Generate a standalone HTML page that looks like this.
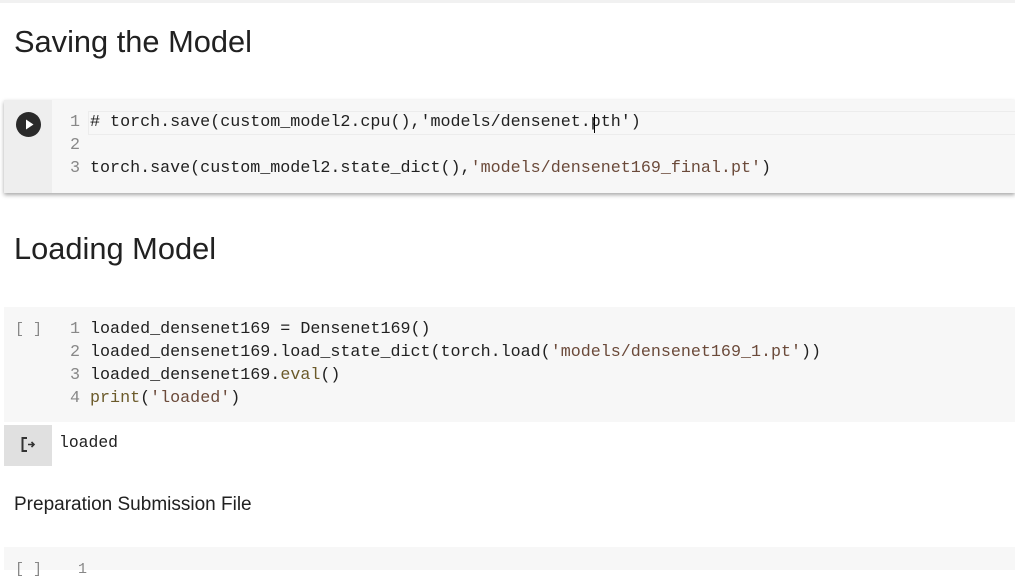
<!DOCTYPE html>
<html><head><style>
body{margin:0;width:1015px;height:570px;background:#fff;position:relative;overflow:hidden;font-family:"Liberation Sans",sans-serif;color:#212121}
.abs{position:absolute}
.code{font-family:"Liberation Mono",monospace;font-size:16.7px;line-height:23px;color:#212121;white-space:pre}
.n{color:#888}
.s{color:#6b4a3a}
.f{color:#6b5a2a}
</style></head><body>
<div class="abs" style="left:0;top:0;width:1015px;height:3px;background:#f1f1f1"></div>
<div class="abs" style="left:14px;top:24px;font-size:30.8px">Saving the Model</div>
<div class="abs" style="left:4px;top:100px;width:1011px;height:93px;background:#f7f7f7;box-shadow:0 2px 4px rgba(0,0,0,.35)"></div>
<div class="abs" style="left:4px;top:100px;width:48px;height:93px;background:#eeeeee"></div>
<div class="abs" style="left:16px;top:112px;width:25px;height:25px;border-radius:50%;background:#2a2a2a"></div>
<svg class="abs" style="left:16px;top:112px" width="25" height="25"><path d="M10 7.5 L17.5 12.5 L10 17.5Z" fill="#fff"/></svg>
<div class="abs" style="left:88px;top:111px;width:927px;height:22px;border:1px solid #ececec;border-right:none"></div>
<div class="abs code" style="left:70px;top:111px"><span class="n">1</span> # torch.save(custom_model2.cpu(),'models/densenet.pth')
<span class="n">2</span>
<span class="n">3</span> torch.save(custom_model2.state_dict(),<span class="s">'models/densenet169_final.pt'</span>)</div>
<div class="abs" style="left:594px;top:114px;width:1px;height:19px;background:#000"></div>
<div class="abs" style="left:14px;top:231px;font-size:30.8px">Loading Model</div>
<div class="abs" style="left:4px;top:307px;width:1011px;height:115px;background:#f7f7f7"></div>
<div class="abs code n" style="left:15px;top:318px;font-size:15px">[ ]</div>
<div class="abs code" style="left:70px;top:318px"><span class="n">1</span> loaded_densenet169 = Densenet169()
<span class="n">2</span> loaded_densenet169.load_state_dict(torch.load(<span class="s">'models/densenet169_1.pt'</span>))
<span class="n">3</span> loaded_densenet169.<span class="f">eval</span>()
<span class="n">4</span> <span class="f">print</span>(<span class="s">'loaded'</span>)</div>
<div class="abs" style="left:4px;top:425px;width:48px;height:41px;background:#e0e0e0"></div>
<svg class="abs" style="left:18px;top:434px" width="22" height="22"><path d="M9 4H4.5V17H9" fill="none" stroke="#333" stroke-width="2"/><path d="M10 10.5H16M13.5 8L16 10.5L13.5 13" fill="none" stroke="#333" stroke-width="1.6"/></svg>
<div class="abs code" style="left:59px;top:431px;font-size:16.4px">loaded</div>
<div class="abs" style="left:14px;top:494px;font-size:19px">Preparation Submission File</div>
<div class="abs" style="left:4px;top:547px;width:1011px;height:23px;background:#f7f7f7"></div>
<div class="abs code n" style="left:15px;top:558px;font-size:15px">[ ]    1</div>
</body></html>
